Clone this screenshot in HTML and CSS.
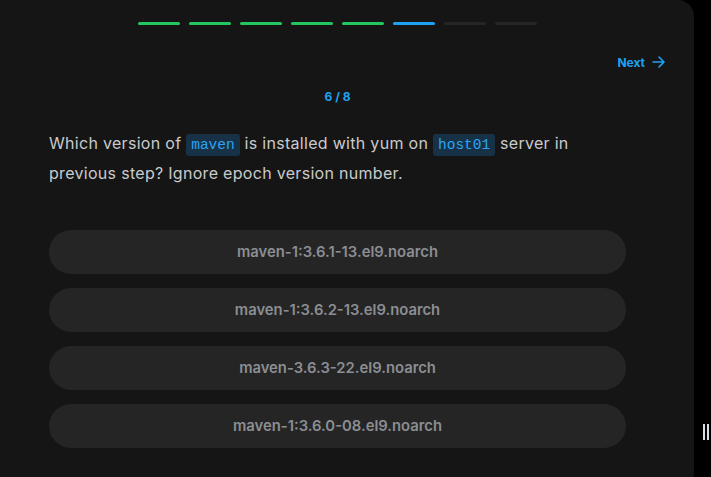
FILE: index.html
```html
<!DOCTYPE html>
<html lang="en">
<head>
<meta charset="utf-8">
<title>Quiz</title>
<link rel="stylesheet" href="styles.css">
</head>
<body>
<main class="panel">
  <div class="progress">
    <span class="bar done"></span>
    <span class="bar done"></span>
    <span class="bar done"></span>
    <span class="bar done"></span>
    <span class="bar done"></span>
    <span class="bar current"></span>
    <span class="bar"></span>
    <span class="bar"></span>
  </div>
  <div class="nav-row">
    <button class="next">Next
      <svg class="arrow" width="13" height="12" viewBox="0 0 13 12" fill="none" stroke="currentColor" stroke-width="1.6" stroke-linecap="round" stroke-linejoin="round"><path d="M1 6h11M7 1l5 5-5 5"/></svg>
    </button>
  </div>
  <div class="content">
    <div class="counter">6 / 8</div>
    <p class="question">Which version of <code>maven</code> is installed with yum on <code>host01</code> server in previous step? Ignore epoch version number.</p>
    <div class="options">
      <button class="option">maven-1:3.6.1-13.el9.noarch</button>
      <button class="option">maven-1:3.6.2-13.el9.noarch</button>
      <button class="option">maven-3.6.3-22.el9.noarch</button>
      <button class="option">maven-1:3.6.0-08.el9.noarch</button>
    </div>
  </div>
</main>
<div class="handle"><span></span><span></span></div>
</body>
</html>
```
FILE: styles.css
```css
html, body {
  margin: 0;
  padding: 0;
  height: 100%;
}
body {
  background: #000;
  font-family: Inter, "Noto Sans", sans-serif;
  display: flex;
  overflow: hidden;
}
.panel {
  width: 694px;
  min-height: 477px;
  box-sizing: border-box;
  background: #151515;
  border-top-right-radius: 16px;
  padding: 22px 29px 0 49px;
}
.progress {
  width: 577px;
  display: flex;
  justify-content: center;
  gap: 9px;
}
.bar {
  width: 42px;
  height: 3px;
  border-radius: 2px;
  background: #252525;
}
.bar.done { background: #22c55e; }
.bar.current { background: #1ea2f4; }
.nav-row {
  display: flex;
  justify-content: flex-end;
  margin-top: 26px;
}
.next {
  background: none;
  border: 0;
  padding: 0;
  color: #1ea2f4;
  font-family: inherit;
  font-weight: 700;
  font-size: 12px;
  display: flex;
  align-items: center;
  gap: 7px;
  height: 22px;
  cursor: pointer;
}
.content {
  width: 577px;
}
.counter {
  margin-top: 16px;
  text-align: center;
  color: #1ea2f4;
  font-weight: 700;
  font-size: 12px;
  line-height: 16px;
}
.question {
  margin: 24px 0 0;
  color: #c9cacc;
  font-size: 16px;
  letter-spacing: 0.3px;
  line-height: 28px;
}
.question code {
  font-family: "Liberation Mono", "DejaVu Sans Mono", monospace;
  font-size: 14.5px;
  letter-spacing: 0;
  color: #2ea3f5;
  background: #173246;
  border-radius: 3px;
  padding: 3px 5px;
}
.options {
  margin-top: 43px;
  display: flex;
  flex-direction: column;
  gap: 14px;
}
.option {
  height: 44px;
  border: 0;
  border-radius: 22px;
  background: #252525;
  color: #8b8e93;
  font-family: inherit;
  font-size: 14.8px;
  font-weight: 600;
  cursor: pointer;
}
.handle {
  position: absolute;
  left: 703px;
  top: 424px;
  display: flex;
  gap: 2px;
}
.handle span {
  width: 2px;
  height: 16px;
  background: #d8dce4;
}
```
